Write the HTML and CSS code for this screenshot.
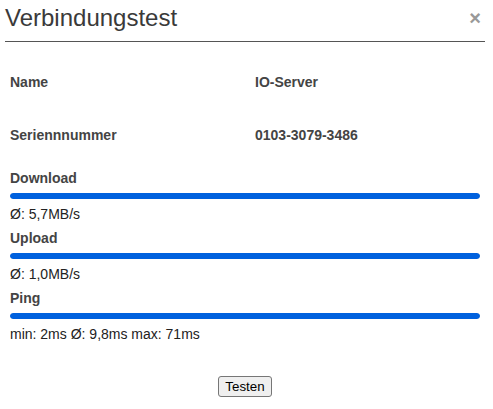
FILE: index.html
```html
<!DOCTYPE html>
<html lang="de">
<head>
    <meta charset="UTF-8">
    <meta name="viewport" content="width=device-width, initial-scale=1.0">
    <title>Verbindungstest</title>
    <link rel="stylesheet" href="styles.css">
</head>
<body>
    <div class="dialog">
        <div class="dialog-header">
            <h1>Verbindungstest</h1>
            <span class="close-button">&times;</span>
        </div>

        <div class="dialog-body">
            <div class="info-grid">
                <div class="info-label">Name</div>
                <div class="info-value">IO-Server</div>
                <div class="info-label">Seriennnummer</div>
                <div class="info-value">0103-3079-3486</div>
            </div>

            <div class="test-section">
                <div class="test-label">Download</div>
                <div class="bar"><div class="bar-fill" style="width:100%"></div></div>
                <div class="test-result">Ø: 5,7MB/s</div>
            </div>
            <div class="test-section">
                <div class="test-label">Upload</div>
                <div class="bar"><div class="bar-fill" style="width:100%"></div></div>
                <div class="test-result">Ø: 1,0MB/s</div>
            </div>
            <div class="test-section">
                <div class="test-label">Ping</div>
                <div class="bar"><div class="bar-fill" style="width:100%"></div></div>
                <div class="test-result">min: 2ms Ø: 9,8ms max: 71ms</div>
            </div>

            <div class="actions">
                <button id="test-button">Testen</button>
            </div>
        </div>
    </div>
</body>
</html>
```

FILE: styles.css
```css
body {
    margin: 0;
    background-color: #fff;
    font-family: "Liberation Sans", Arial, sans-serif;
    font-size: 14px;
    line-height: 20px;
    color: #222;
}
.dialog {
    width: 480px;
    margin-left: 5px;
}
.dialog-header {
    display: flex;
    justify-content: space-between;
    align-items: flex-start;
    padding-top: 4px;
    padding-bottom: 9px;
    border-bottom: 1px solid #555;
}
.dialog-header h1 {
    margin: 0;
    font-size: 24px;
    font-weight: normal;
    line-height: 28px;
    color: #3a3a3a;
}
.close-button {
    margin-top: 4px;
    margin-right: 4px;
    font-size: 20px;
    font-weight: bold;
    line-height: 20px;
    color: #999;
    cursor: pointer;
}
.dialog-body {
    padding: 30px 5px 0 5px;
}
.info-grid {
    display: grid;
    grid-template-columns: 245px 1fr;
    row-gap: 33px;
    font-weight: bold;
    color: #444;
}
.test-section {
    margin-bottom: 4px;
}
.info-grid + .test-section {
    margin-top: 23px;
}
.test-label {
    font-weight: bold;
    color: #444;
}
.bar {
    height: 6px;
    margin: 5px 0;
    border-radius: 3px;
    background-color: #e6e6e6;
    overflow: hidden;
}
.bar-fill {
    height: 100%;
    border-radius: 3px;
    background-color: #0061de;
}
.test-result {
    color: #222;
}
.actions {
    display: flex;
    justify-content: center;
    margin-top: 32px;
}
#test-button {
    font-family: "Liberation Sans", Arial, sans-serif;
    font-size: 13.33px;
    padding: 2px 6px;
    color: #000;
    background-color: #efefef;
    border: 1px solid #767676;
    border-radius: 3px;
    cursor: pointer;
}
```
